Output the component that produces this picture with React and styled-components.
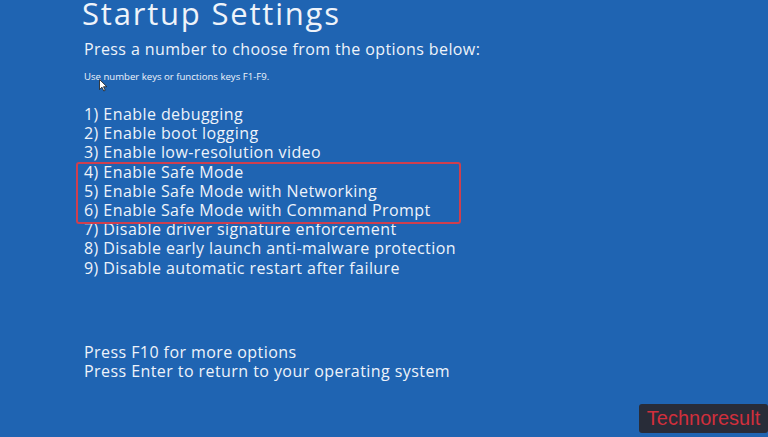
import React from 'react';
import styled, { createGlobalStyle } from 'styled-components';

const GlobalStyle = createGlobalStyle`
	html, body {
		margin: 0;
		padding: 0;
		background-color: #1f64b2;
	}
`;

const Screen = styled.div`
	position: relative;
	width: 768px;
	height: 437px;
	overflow: hidden;
	background-color: #1f64b2;
	color: #eef3fa;
	font-family: "Open Sans", "Noto Sans", sans-serif;
	padding-left: 84px;
	box-sizing: border-box;
	display: flex;
	flex-direction: column;
`;

const Title = styled.h1`
	margin: 0 0 0 -2px;
	font-weight: 400;
	font-size: 31px;
	line-height: 26px;
	letter-spacing: 1.8px;
	white-space: nowrap;
`;

const Prompt = styled.p`
	margin: 13px 0 0;
	font-size: 16px;
	line-height: 20px;
	letter-spacing: 0.4px;
	white-space: nowrap;
`;

const Hint = styled.p`
	margin: 11px 0 0;
	font-size: 9.6px;
	line-height: 14px;
	white-space: nowrap;
`;

const OptionList = styled.div`
	margin-top: 21px;
	display: flex;
	flex-direction: column;
`;

// the red annotation box drawn over options 4-6
const Highlight = styled.div`
	position: relative;
	display: flex;
	flex-direction: column;

	&::before {
		content: '';
		position: absolute;
		top: -1px;
		bottom: -3.5px;
		left: -8px;
		width: 385px;
		box-sizing: border-box;
		border: 2px solid #cf3f4e;
		border-radius: 3px;
	}
`;

const Option = styled.div`
	font-size: 16px;
	line-height: 19.2px;
	letter-spacing: 0.43px;
	white-space: nowrap;
`;

const Footer = styled.div`
	margin-top: 65px;
	display: flex;
	flex-direction: column;
`;

const Watermark = styled.div`
	position: absolute;
	right: 0;
	bottom: 4px;
	width: 129px;
	height: 29px;
	background-color: #282c38;
	border-radius: 3px;
	color: #d12f3c;
	font-family: "Liberation Sans", Arial, sans-serif;
	font-size: 20px;
	display: flex;
	align-items: center;
	justify-content: center;
`;

const Cursor = styled.svg`
	position: absolute;
	left: 99px;
	top: 79px;
`;

const options = [
	'1) Enable debugging',
	'2) Enable boot logging',
	'3) Enable low-resolution video',
	'4) Enable Safe Mode',
	'5) Enable Safe Mode with Networking',
	'6) Enable Safe Mode with Command Prompt',
	'7) Disable driver signature enforcement',
	'8) Disable early launch anti-malware protection',
	'9) Disable automatic restart after failure',
];

const App = () => {
	const before = options.slice(0, 3);
	const boxed = options.slice(3, 6);
	const after = options.slice(6);

	return (
		<Screen>
			<GlobalStyle />
			<Title>Startup Settings</Title>
			<Prompt>Press a number to choose from the options below:</Prompt>
			<Hint>Use number keys or functions keys F1-F9.</Hint>
			<OptionList>
				{before.map(o => <Option key={o}>{o}</Option>)}
				<Highlight>
					{boxed.map(o => <Option key={o}>{o}</Option>)}
				</Highlight>
				{after.map(o => <Option key={o}>{o}</Option>)}
			</OptionList>
			<Footer>
				<Option>Press F10 for more options</Option>
				<Option>Press Enter to return to your operating system</Option>
			</Footer>
			<Cursor width="9" height="13" viewBox="0 0 9 13">
				<path d="M0.5 0.5 L0.5 10.5 L3 8.2 L4.8 12 L6.2 11.3 L4.5 7.7 L7.8 7.7 Z" fill="#ffffff" stroke="#1a1a1a" strokeWidth="0.8" />
			</Cursor>
			<Watermark>Technoresult</Watermark>
		</Screen>
	);
};

export default App;
